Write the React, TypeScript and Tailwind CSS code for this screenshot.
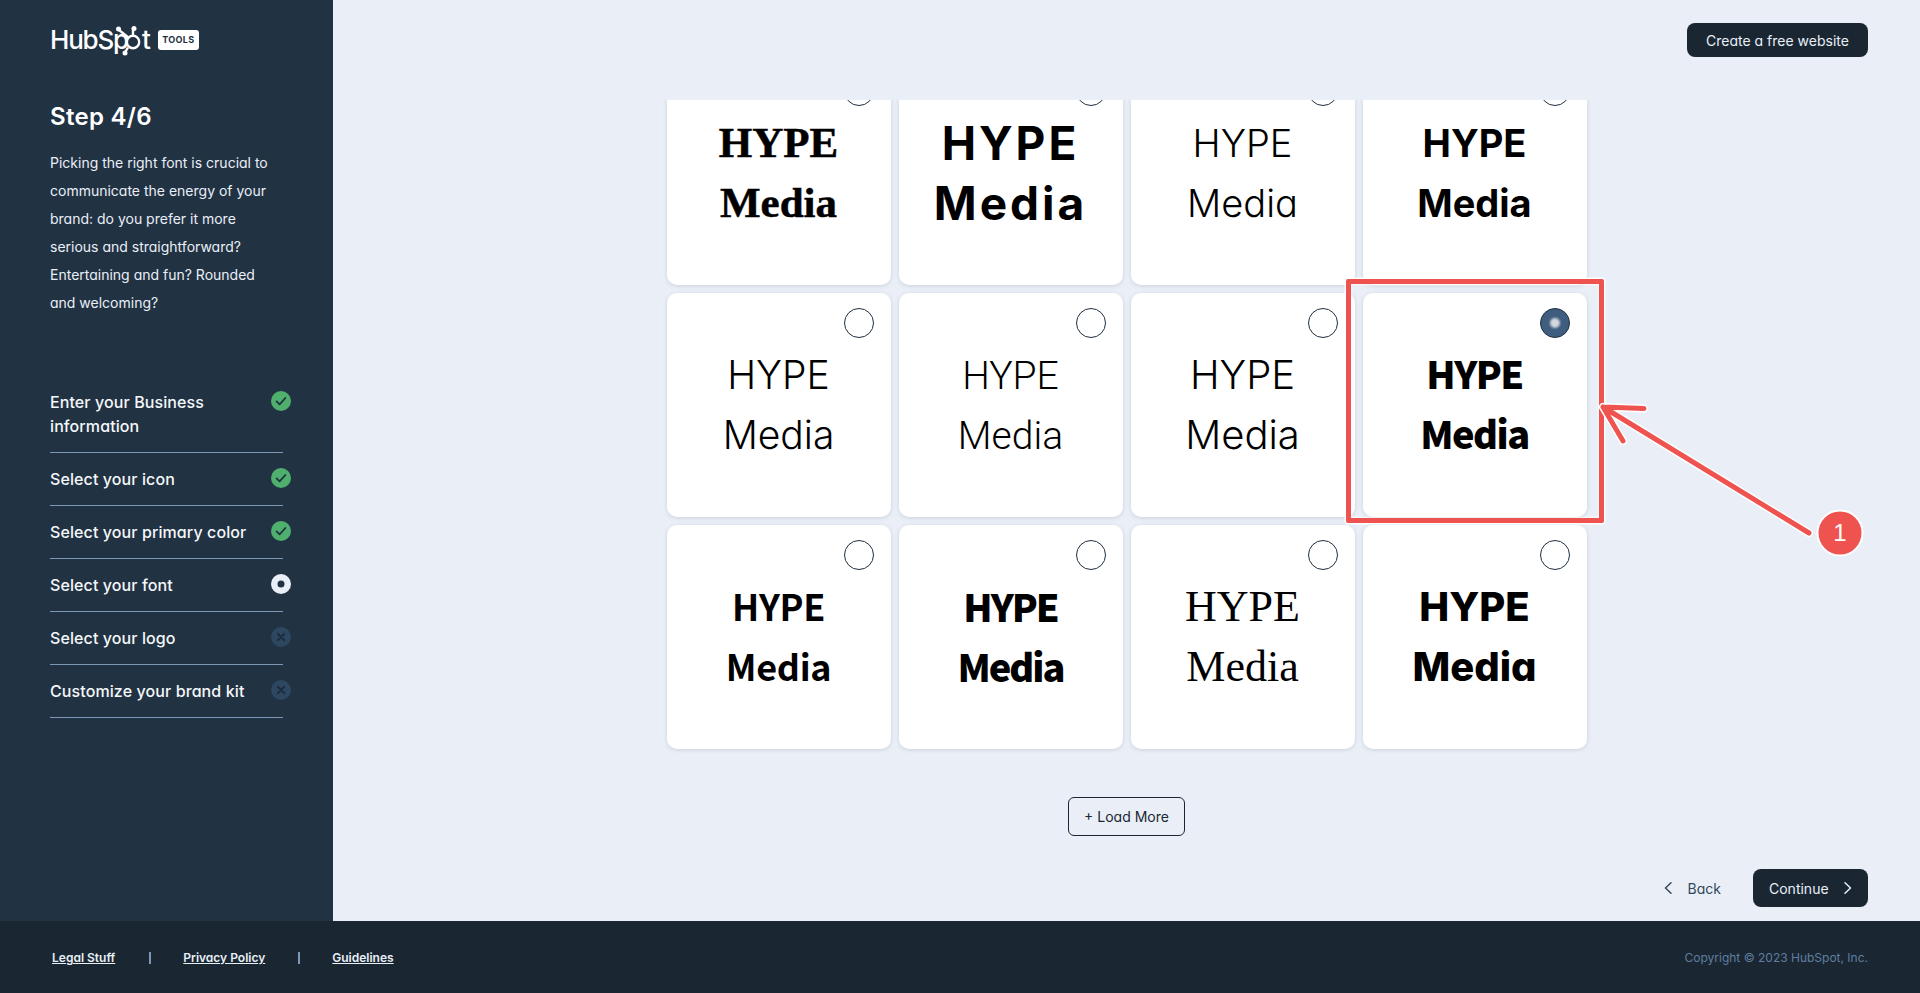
import React from "react";

const L = "font-['Inter'] [font-feature-settings:'cv11']";

const cards: { cls: string; sel?: boolean }[] = [
  { cls: "font-['Liberation_Serif'] font-bold text-[43px] [-webkit-text-stroke:0.5px_black]" },
  { cls: "font-['Inter'] [font-feature-settings:normal] font-bold text-[46px] tracking-[3px]" },
  { cls: "font-['Inter'] font-light text-[38px]" },
  { cls: "font-['Inter'] [font-feature-settings:normal] font-bold text-[38px]" },
  { cls: "font-['Inter'] [font-feature-settings:normal] font-light text-[39px]" },
  { cls: "font-['Roboto'] font-light text-[39px] pt-[2px]" },
  { cls: "font-['Inter'] [font-feature-settings:normal] font-light text-[40px]" },
  { cls: "font-['Noto_Sans_CJK_JP'] font-black text-[38px] tracking-[-1.500px] pb-[4px]", sel: true },
  { cls: "font-['Noto_Sans_CJK_JP'] font-bold text-[36px] tracking-[-0.300px] pb-[4px]" },
  { cls: "font-['Noto_Sans_CJK_JP'] font-black text-[38px] tracking-[-2px] pb-[2px]" },
  { cls: "font-['Liberation_Serif'] text-[44px]" },
  { cls: "font-['Inter'] font-extrabold text-[40px]" },
];

function Status({ kind }: { kind: "done" | "current" | "todo" }) {
  if (kind === "done")
    return (
      <svg viewBox="0 0 20 20" className="w-5 h-5 shrink-0 mt-[1px] -mr-2">
        <circle cx="10" cy="10" r="10" fill="#4fb06d" />
        <path d="M5.6 10.4l3 3 5.8-6.4" fill="none" stroke="#213243" strokeWidth="1.8" strokeLinecap="round" strokeLinejoin="round" />
      </svg>
    );
  if (kind === "current")
    return (
      <svg viewBox="0 0 20 20" className="w-5 h-5 shrink-0 mt-[1px] -mr-2">
        <circle cx="10" cy="10" r="10" fill="#e9eff7" />
        <circle cx="10" cy="10" r="3.5" fill="#213243" />
      </svg>
    );
  return (
    <svg viewBox="0 0 20 20" className="w-5 h-5 shrink-0 mt-[1px] -mr-2">
      <circle cx="10" cy="10" r="10" fill="#2d4760" />
      <path d="M6.8 6.8l6.4 6.4M13.2 6.8l-6.4 6.4" fill="none" stroke="#1a2a3a" strokeWidth="1.9" strokeLinecap="round" />
    </svg>
  );
}

function Step({ label, kind }: { label: React.ReactNode; kind: "done" | "current" | "todo" }) {
  return (
    <div className="flex justify-between items-start pt-[14px] pb-[14px] border-b border-[#7c98b6] text-[16px] leading-[24px] tracking-[0.1px] font-medium text-[#f5f8fa]">
      <div>{label}</div>
      <Status kind={kind} />
    </div>
  );
}

function Card({ cls, sel }: { cls: string; sel?: boolean }) {
  return (
    <div className="relative h-[224px] bg-white rounded-[10px] shadow-[0_1px_4px_rgba(45,62,80,0.16)] flex items-center justify-center">
      {sel ? (
        <div className="absolute top-[15px] right-[17px] w-[30px] h-[30px] rounded-full bg-[#3f5d7f] border border-[#1f2f40] flex items-center justify-center">
          <div className="w-[10px] h-[10px] rounded-full bg-[#d5d9de] blur-[1px]" />
        </div>
      ) : (
        <div className="absolute top-[15px] right-[17px] w-[30px] h-[30px] rounded-full bg-white border border-[#1f2f40]" />
      )}
      <div className={`text-center leading-[60px] text-black ${cls}`}>
        <div>HYPE</div>
        <div>Media</div>
      </div>
    </div>
  );
}

function Logo() {
  return (
    <div className="flex items-center h-[30px] text-white">
      <span className="font-['Inter'] font-medium text-[26px] leading-[30px] tracking-[-1.2px]">HubSp</span>
      <svg viewBox="0 0 30 32" className="w-[30px] h-[32px] -ml-[13px] -mr-[3px] shrink-0">
        <g fill="none" stroke="#fff" strokeWidth="2.4">
          <circle cx="18" cy="18" r="6.2" />
          <path d="M4 6l10 8M18 4v8M13 23.500l-3 5" />
        </g>
        <circle cx="3.500" cy="5" r="2.500" fill="#fff" />
        <circle cx="19" cy="4.500" r="2.500" fill="#fff" />
        <circle cx="10" cy="29" r="2.500" fill="#fff" />
      </svg>
      <span className="font-['Inter'] font-medium text-[26px] leading-[30px]">t</span>
      <span className="ml-[7px] w-[41px] h-[20px] rounded-[3px] bg-white text-[#213243] text-[9px] leading-[20px] font-bold text-center font-['Inter'] tracking-[0.3px]">TOOLS</span>
    </div>
  );
}

export default function App() {
  return (
    <div className={`h-[993px] w-[1920px] flex flex-col overflow-hidden bg-[#eaeff7] ${L}`}>
      <div className="relative h-[921px] flex">
        <aside className="w-[333px] shrink-0 bg-[#213243] pl-[50px] pr-[50px] pt-[25px]">
          <Logo />
          <h1 className="mt-[46px] text-[24px] leading-[32px] tracking-[0.3px] font-semibold text-white">Step 4/6</h1>
          <p className="mt-[16px] text-[14px] leading-[28px] text-[#e9eff7] w-[226px]">
            Picking the right font is crucial to communicate the energy of your brand: do you prefer it more serious and straightforward? Entertaining and fun? Rounded and welcoming?
          </p>
          <div className="mt-[59px] flex flex-col">
            <Step label={<>Enter your Business<br />information</>} kind="done" />
            <Step label="Select your icon" kind="done" />
            <Step label="Select your primary color" kind="done" />
            <Step label="Select your font" kind="current" />
            <Step label="Select your logo" kind="todo" />
            <Step label="Customize your brand kit" kind="todo" />
          </div>
        </aside>
        <main className="flex-1 flex flex-col">
          <div className="h-[100px] flex justify-end pt-[23px] pr-[52px]">
            <button className="h-[34px] w-[181px] rounded-[8px] bg-[#1a2733] text-[#e9eff7] text-[14px]">Create a free website</button>
          </div>
          <div className="h-[653px] overflow-hidden">
            <div className="-mt-[39px] w-[920px] mx-auto grid grid-cols-4 gap-2">
              {cards.map((c, i) => (
                <Card key={i} cls={c.cls} sel={c.sel} />
              ))}
            </div>
          </div>
          <div className="mt-[44px] flex justify-center">
            <button className="h-[39px] w-[117px] rounded-[6px] border border-[#1a2733] text-[14px] text-[#1a2733]">+ Load More</button>
          </div>
          <div className="mt-[33px] flex justify-end items-center pr-[52px]">
            <button className="flex items-center text-[14px] text-[#33475b] mr-[32px]">
              <svg viewBox="0 0 8 12" className="w-2 h-3 mr-[16px]"><path d="M7 .8L1.500 6 7 11.200" fill="none" stroke="#33475b" strokeWidth="1.5" strokeLinecap="round" strokeLinejoin="round" /></svg>
              Back
            </button>
            <button className="h-[38px] w-[115px] rounded-[8px] bg-[#1a2733] text-[#e9eff7] text-[14px] flex items-center pl-4">
              Continue
              <svg viewBox="0 0 8 12" className="w-2 h-3 ml-[15px]"><path d="M1 .8L6.500 6 1 11.200" fill="none" stroke="#e9eff7" strokeWidth="1.5" strokeLinecap="round" strokeLinejoin="round" /></svg>
            </button>
          </div>
        </main>

        <div className="absolute left-[1346px] top-[279px] w-[258px] h-[244px] rounded-[2px] border-[5px] border-[#ef5350] shadow-[0_0_0_1.5px_rgba(255,255,255,0.9),inset_0_0_0_1.5px_rgba(255,255,255,0.5)]" />
        <svg className="absolute left-0 top-0 pointer-events-none" width="1920" height="921" viewBox="0 0 1920 921">
          <g fill="none" strokeLinecap="round" strokeLinejoin="round">
            <path d="M1809 533L1603 407M1644 408.500L1603 407L1623 441" stroke="#ffffff" strokeWidth="8" />
            <path d="M1809 533L1603 407M1644 408.500L1603 407L1623 441" stroke="#ef5350" strokeWidth="5" />
          </g>
          <circle cx="1840" cy="533" r="22.500" fill="#ef5350" stroke="#ffffff" strokeWidth="2" />
        </svg>
        <div className="absolute left-[1818px] top-[511px] w-[44px] h-[44px] flex items-center justify-center font-['Liberation_Sans'] text-[24px] text-white">1</div>
      </div>
      <footer className="h-[72px] bg-[#1a2733] flex items-center justify-between pl-[52px] pr-[52px] pt-[2px]">
        <div className="flex items-center text-[12px] font-semibold text-[#e9eff7]">
          <a className="underline">Legal Stuff</a>
          <span className="w-[2px] h-[12px] bg-[#7c98b6] ml-[34px] mr-[32px]" />
          <a className="underline">Privacy Policy</a>
          <span className="w-[2px] h-[12px] bg-[#7c98b6] ml-[33px] mr-[32px]" />
          <a className="underline">Guidelines</a>
        </div>
        <div className="text-[12px] text-[#5f7e9f]">Copyright © 2023 HubSpot, Inc.</div>
      </footer>
    </div>
  );
}
